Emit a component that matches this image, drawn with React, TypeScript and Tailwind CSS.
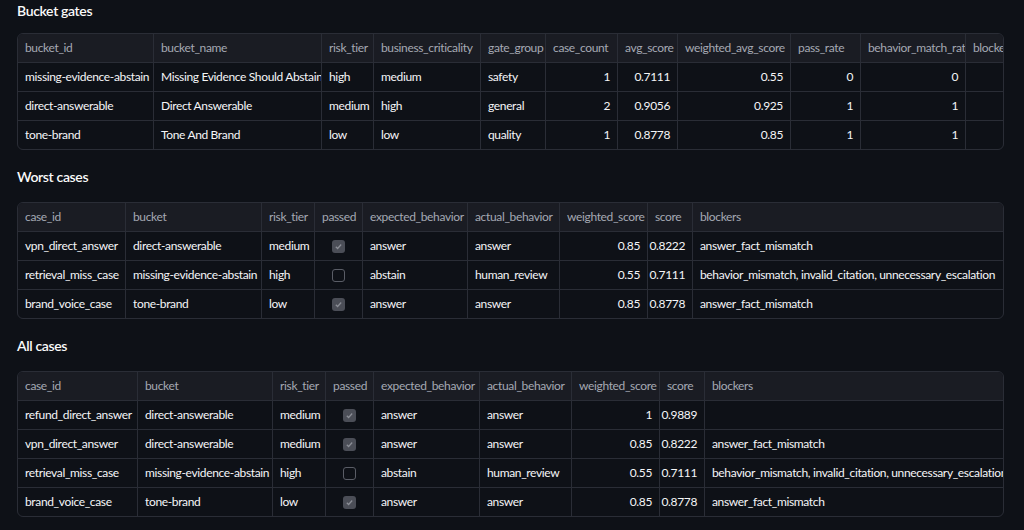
import React from "react";

type Col = { w: number; name: string; num?: boolean; check?: boolean };

function Check({ on }: { on: boolean }) {
  return on ? (
    <span className="inline-flex w-[13px] h-[13px] rounded-[3px] bg-[#4b4e57] items-center justify-center">
      <svg width="9" height="9" viewBox="0 0 10 10"><path d="M2 5.2l2 2 4-4.4" stroke="#8a8d95" strokeWidth="1.4" fill="none" /></svg>
    </span>
  ) : (
    <span className="inline-block w-[13px] h-[13px] rounded-[3px] border border-[#5a5d66]" />
  );
}

function Table({ cols, rows }: { cols: Col[]; rows: (string | boolean)[][] }) {
  return (
    <div className="mx-[17px] w-[987px] overflow-hidden rounded-md border border-[#2a2d36]">
      <div className="flex w-max bg-[#1a1c23] h-[28px] text-[#a5a9b3]">
        {cols.map((c, i) => (
          <div key={i} style={{ width: c.w }} className={`shrink-0 px-[7px] flex items-center border-r border-[#2a2d36] whitespace-nowrap overflow-hidden ${i === cols.length - 1 ? "border-r-0" : ""}`}>{c.name}</div>
        ))}
      </div>
      {rows.map((r, ri) => (
        <div key={ri} className="flex w-max h-[29px] border-t border-[#2a2d36] text-[#f5f5f7]">
          {cols.map((c, i) => (
            <div key={i} style={{ width: c.w }} className={`shrink-0 px-[7px] flex items-center border-r border-[#2a2d36] whitespace-nowrap overflow-hidden ${c.num ? "justify-end" : ""} ${c.check ? "justify-center" : ""}`}>
              {c.check ? <Check on={r[i] as boolean} /> : (r[i] as string)}
            </div>
          ))}
        </div>
      ))}
    </div>
  );
}

const t1: Col[] = [
  { w: 136, name: "bucket_id" }, { w: 168, name: "bucket_name" }, { w: 52, name: "risk_tier" },
  { w: 107, name: "business_criticality" }, { w: 65, name: "gate_group" }, { w: 72, name: "case_count", num: true },
  { w: 60, name: "avg_score", num: true }, { w: 113, name: "weighted_avg_score", num: true }, { w: 70, name: "pass_rate", num: true },
  { w: 105, name: "behavior_match_rate", num: true }, { w: 80, name: "blockers" },
];
const r1 = [
  ["missing-evidence-abstain", "Missing Evidence Should Abstain", "high", "medium", "safety", "1", "0.7111", "0.55", "0", "0", ""],
  ["direct-answerable", "Direct Answerable", "medium", "high", "general", "2", "0.9056", "0.925", "1", "1", ""],
  ["tone-brand", "Tone And Brand", "low", "low", "quality", "1", "0.8778", "0.85", "1", "1", ""],
];
const t2: Col[] = [
  { w: 108, name: "case_id" }, { w: 136, name: "bucket" }, { w: 53, name: "risk_tier" }, { w: 48, name: "passed", check: true },
  { w: 105, name: "expected_behavior" }, { w: 92, name: "actual_behavior" }, { w: 88, name: "weighted_score", num: true },
  { w: 45, name: "score", num: true }, { w: 330, name: "blockers" },
];
const r2 = [
  ["vpn_direct_answer", "direct-answerable", "medium", true, "answer", "answer", "0.85", "0.8222", "answer_fact_mismatch"],
  ["retrieval_miss_case", "missing-evidence-abstain", "high", false, "abstain", "human_review", "0.55", "0.7111", "behavior_mismatch, invalid_citation, unnecessary_escalation"],
  ["brand_voice_case", "tone-brand", "low", true, "answer", "answer", "0.85", "0.8778", "answer_fact_mismatch"],
];
const t3: Col[] = [
  { w: 120, name: "case_id" }, { w: 135, name: "bucket" }, { w: 53, name: "risk_tier" }, { w: 48, name: "passed", check: true },
  { w: 106, name: "expected_behavior" }, { w: 92, name: "actual_behavior" }, { w: 88, name: "weighted_score", num: true },
  { w: 45, name: "score", num: true }, { w: 330, name: "blockers" },
];
const r3 = [
  ["refund_direct_answer", "direct-answerable", "medium", true, "answer", "answer", "1", "0.9889", ""],
  ...r2,
];

export default function App() {
  return (
    <div className="w-[1024px] h-[530px] overflow-hidden bg-[#0e1117] text-[12px] tracking-[-0.35px]" style={{ fontFamily: "Lato, 'Noto Sans', sans-serif" }}>
      <div className="pl-[17px] pt-[1px] h-[33px] text-[14px] font-semibold text-[#fafafa] leading-[20px]">Bucket gates</div>
      <Table cols={t1} rows={r1} />
      <div className="pl-[17px] pt-[17px] h-[52px] text-[14px] font-semibold text-[#fafafa] leading-[20px]">Worst cases</div>
      <Table cols={t2} rows={r2} />
      <div className="pl-[17px] pt-[17px] h-[52px] text-[14px] font-semibold text-[#fafafa] leading-[20px]">All cases</div>
      <Table cols={t3} rows={r3} />
    </div>
  );
}
